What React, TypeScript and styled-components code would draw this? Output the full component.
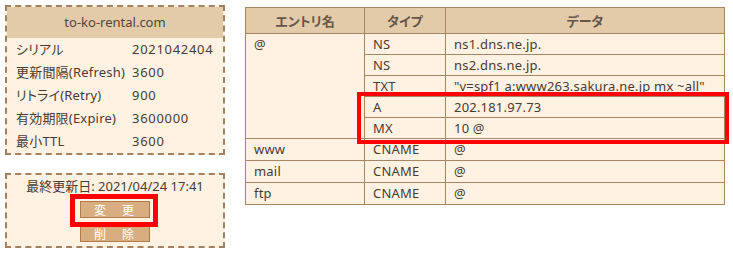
import React from 'react';
import styled, { createGlobalStyle } from 'styled-components';

const GlobalStyle = createGlobalStyle`
  body {
    margin: 0;
    background: #ffffff;
    font-family: "Noto Sans", "Noto Sans CJK JP", sans-serif;
    font-feature-settings: "palt";
    color: #4a3b31;
  }
`;

const zoneInfo = [
  { label: 'シリアル', value: '2021042404' },
  { label: '更新間隔(Refresh)', value: '3600' },
  { label: 'リトライ(Retry)', value: '900' },
  { label: '有効期限(Expire)', value: '3600000' },
  { label: '最小TTL', value: '3600' },
];

const records = [
  { name: '@', span: 5, type: 'NS', data: 'ns1.dns.ne.jp.' },
  { type: 'NS', data: 'ns2.dns.ne.jp.' },
  { type: 'TXT', data: '"v=spf1 a:www263.sakura.ne.jp mx ~all"' },
  { type: 'A', data: '202.181.97.73' },
  { type: 'MX', data: '10 @' },
  { name: 'www', span: 1, type: 'CNAME', data: '@' },
  { name: 'mail', span: 1, type: 'CNAME', data: '@' },
  { name: 'ftp', span: 1, type: 'CNAME', data: '@' },
];

export default function App() {
  return (
    <>
      <GlobalStyle />
      <Page>
        <Side>
          <ZoneBox>
            <ZoneTitle>to-ko-rental.com</ZoneTitle>
            <ZoneList>
              {zoneInfo.map((row) => (
                <React.Fragment key={row.label}>
                  <ZoneLabel>{row.label}</ZoneLabel>
                  <ZoneValue>{row.value}</ZoneValue>
                </React.Fragment>
              ))}
            </ZoneList>
          </ZoneBox>

          <ActionBox>
            <Updated>最終更新日: 2021/04/24 17:41</Updated>
            <Marked>
              <ActionButton>変　更</ActionButton>
              <ButtonHighlight />
            </Marked>
            <ActionButton>削　除</ActionButton>
          </ActionBox>
        </Side>

        <TableWrap>
          <RecordTable>
            <colgroup>
              <col style={{ width: 119 }} />
              <col style={{ width: 81 }} />
              <col />
            </colgroup>
            <thead>
              <tr>
                <Th>エントリ名</Th>
                <Th>タイプ</Th>
                <Th>データ</Th>
              </tr>
            </thead>
            <tbody>
              {records.map((r, i) => (
                <tr key={i}>
                  {r.name !== undefined && <Td rowSpan={r.span}>{r.name}</Td>}
                  <Td>{r.type}</Td>
                  <Td>{r.data}</Td>
                </tr>
              ))}
            </tbody>
          </RecordTable>
          <RowsHighlight />
        </TableWrap>
      </Page>
    </>
  );
}

const Page = styled.div`
  display: flex;
  align-items: flex-start;
  gap: 20px;
  padding: 5px;
`;

const Side = styled.div`
  display: flex;
  flex-direction: column;
  gap: 18px;
  width: 220px;
`;

const ZoneBox = styled.div`
  border: 2px dashed #a3805f;
  background: #fff2e3;
`;

const ZoneTitle = styled.div`
  background: #e3cba9;
  height: 31px;
  line-height: 31px;
  text-align: center;
  font-size: 13px;
  color: #54443a;
`;

const ZoneList = styled.div`
  display: grid;
  grid-template-columns: 116px 1fr;
  grid-auto-rows: 23px;
  padding-left: 9px;
  font-size: 13px;
  line-height: 23px;
`;

const ZoneLabel = styled.div`
  white-space: nowrap;
  letter-spacing: 0.2px;
`;

const ZoneValue = styled.div`
  white-space: nowrap;
  letter-spacing: 0.7px;
`;

const ActionBox = styled.div`
  border: 2px dashed #a3805f;
  background: #fff2e3;
  display: flex;
  flex-direction: column;
  align-items: center;
  padding: 3px 0 4px;
`;

const Updated = styled.div`
  font-size: 13px;
  line-height: 17px;
  margin-bottom: 6px;
  white-space: nowrap;
  color: #4a3b31;
`;

const Marked = styled.div`
  position: relative;
  display: flex;
  margin-bottom: 7px;
`;

const ActionButton = styled.button`
  width: 70px;
  height: 17px;
  padding: 0;
  border: 1px solid #b07a4a;
  background: #d8ae80;
  color: #ffffff;
  font-family: "Noto Sans CJK JP", sans-serif;
  font-size: 12px;
  line-height: 15px;
  letter-spacing: 2px;
  cursor: pointer;
`;

const ButtonHighlight = styled.div`
  position: absolute;
  top: -7px;
  bottom: -9px;
  left: -10px;
  right: -8px;
  border: 5px solid #ff0000;
  pointer-events: none;
`;

const TableWrap = styled.div`
  position: relative;
  margin-top: 2px;
`;

const RecordTable = styled.table`
  width: 480px;
  border-collapse: collapse;
  table-layout: fixed;
  background: #fff2e3;
  border: 1px solid #a88563;
  font-size: 13px;
`;

const Th = styled.th`
  background: #e3cba9;
  height: 25px;
  padding: 0;
  border: 1px solid #a88563;
  font-weight: 600;
  color: #66564a;
  text-align: center;
`;

const Td = styled.td`
  height: 20px;
  padding: 0 0 0 8px;
  border: 1px solid #a88563;
  line-height: 19px;
  vertical-align: middle;
  white-space: nowrap;
  letter-spacing: 0.2px;
  &[rowspan] {
    vertical-align: top;
    padding-top: 1px;
  }
`;

const RowsHighlight = styled.div`
  position: absolute;
  top: 85px;
  left: 112px;
  width: 372px;
  height: 52px;
  box-sizing: border-box;
  border: 4px solid #ff0000;
  pointer-events: none;
`;
